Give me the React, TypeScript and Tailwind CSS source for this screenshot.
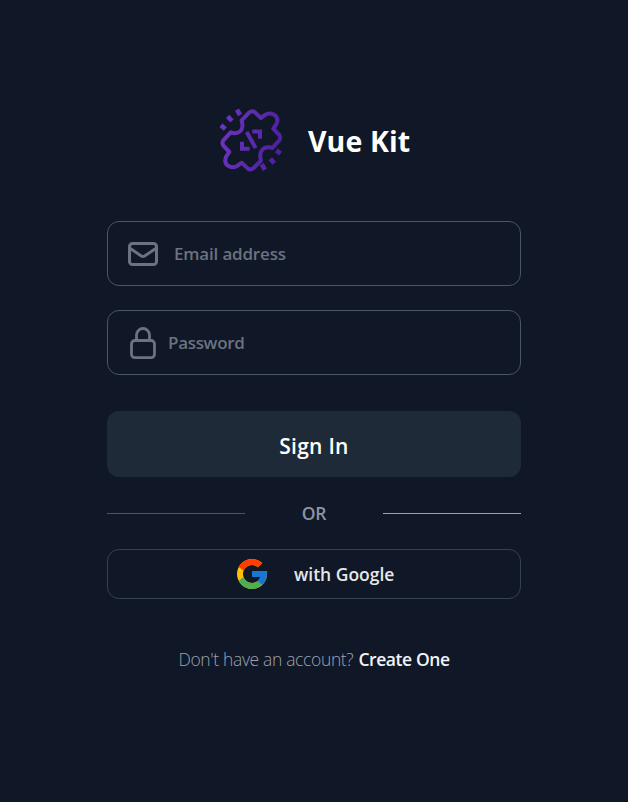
import type { ReactNode } from "react";

function Logo() {
  return (
    <svg className="h-[84px] w-[84px] shrink-0" viewBox="0 0 252 252" fill="none" aria-hidden="true">
      <defs>
        <linearGradient id="purple" gradientUnits="userSpaceOnUse" x1="30" y1="100" x2="220" y2="150">
          <stop offset="0" stopColor="#6b34c0" />
          <stop offset="1" stopColor="#4c1f9c" />
        </linearGradient>
      </defs>
      <g stroke="url(#purple)" strokeWidth="12">
        <path
          strokeLinejoin="round"
          d="M95 67L117 44Q126 36 135 43L153 60C157 58 160 54 165 51C182 40 205 51 202 70C201 79 195 85 190 92L208 111Q213 119 208 127L187 150C179 147 170 147 162 151C151 158 149 173 153 188L131 210Q122 218 113 211L95 194C91 196 88 200 83 203C66 214 43 203 46 184C47 175 53 169 58 162L40 143Q35 135 40 127L62 103C69 106 78 107 86 103C98 97 99 82 95 67Z"
        />
        <path d="M110 102L137 150M127 100.500H150V122M96 131V152.500H119" />
        <path strokeWidth="14" d="M33 82L46 93M53 55L66 69M81 35L90 51M199 157L212 167M181 182L193 196M155 199L165 215" />
      </g>
    </svg>
  );
}

function MailIcon() {
  return (
    <svg className="h-[36px] w-[36px] shrink-0" viewBox="0 0 24 24" fill="none" stroke="#6b7280" strokeWidth="2" strokeLinecap="round" strokeLinejoin="round" aria-hidden="true">
      <path d="M3 8l7.89 5.26a2 2 0 002.22 0L21 8M5 19h14a2 2 0 002-2V7a2 2 0 00-2-2H5a2 2 0 00-2 2v10a2 2 0 002 2z" />
    </svg>
  );
}

function LockIcon() {
  return (
    <svg className="h-[36px] w-[36px] shrink-0" viewBox="0 0 36 36" fill="none" stroke="#6b7280" strokeWidth="2.8" strokeLinecap="round" strokeLinejoin="round" aria-hidden="true">
      <rect x="6.500" y="15.500" width="23" height="17.200" rx="3.400" />
      <path d="M11.500 15.500V10a6.500 6.500 0 0113 0v5.500" />
    </svg>
  );
}

function GoogleIcon() {
  return (
    <svg className="h-[36px] w-[36px] shrink-0" viewBox="0 0 48 48" aria-hidden="true">
      <path fill="#FFC107" d="M43.6 20H24v8h11.3C33.7 32.7 29.2 36 24 36c-6.6 0-12-5.4-12-12s5.4-12 12-12c3.1 0 5.8 1.2 8 3l5.7-5.7C34 6.1 29.3 4 24 4 13 4 4 13 4 24s9 20 20 20 20-9 20-20c0-1.4-.1-2.7-.4-4z" />
      <path fill="#FF3D00" d="M6.3 14.7l6.6 4.8C14.7 15.1 19 12 24 12c3.1 0 5.8 1.2 8 3l5.7-5.7C34 6.1 29.3 4 24 4 16.3 4 9.7 8.3 6.3 14.7z" />
      <path fill="#4CAF50" d="M24 44c5.2 0 9.9-2 13.4-5.2l-6.2-5.2A12 12 0 0124 36c-5.2 0-9.6-3.3-11.3-7.9l-6.5 5C9.5 39.6 16.2 44 24 44z" />
      <path fill="#1976D2" d="M43.6 20H24v8h11.3a12 12 0 01-4.1 5.6l6.2 5.2C37 39.2 44 34 44 24c0-1.4-.1-2.7-.4-4z" />
    </svg>
  );
}

function Field({ children }: { children: ReactNode }) {
  return <label className="flex h-[65px] items-center rounded-xl border border-[#4b5563] pl-[17px]">{children}</label>;
}

const inputStyle =
  "min-w-0 flex-1 bg-transparent text-[17px] font-semibold text-gray-300 outline-none placeholder:text-[#6b7280]";

export default function App() {
  return (
    <main className="flex h-[802px] w-full flex-col items-center bg-[#101726] pt-[98px] font-['Open_Sans','Noto_Sans',sans-serif]">
      <header className="flex h-[84px] w-[208px] items-center gap-[14px]">
        <Logo />
        <h1 className="mt-[2px] shrink-0 text-[28.5px] font-bold tracking-[0.1px] whitespace-nowrap text-white">Vue Kit</h1>
      </header>

      <form className="mt-[39px] flex w-[414px] flex-col">
        <Field>
          <MailIcon />
          <input type="email" placeholder="Email address" className={`${inputStyle} ml-[13px] tracking-[-0.18px]`} />
        </Field>
        <div className="mt-6">
          <Field>
            <LockIcon />
            <input type="password" placeholder="Password" className={`${inputStyle} ml-[7px] tracking-[-0.32px]`} />
          </Field>
        </div>
        <button type="button" className="mt-9 h-[66px] rounded-xl bg-[#1f2a38] pt-[5px] text-[21px] font-semibold tracking-[0.25px] text-white">
          Sign In
        </button>
        <div className="mt-[25px] grid h-[23px] grid-cols-3 items-center">
          <span className="h-px bg-[#4b5563]" />
          <span className="text-center text-[17.5px] leading-[23px] font-semibold tracking-[-0.2px] text-[#8d95a2]">OR</span>
          <span className="h-px bg-[#9ca3af]" />
        </div>
        <button type="button" className="mt-[24px] flex h-[50px] items-center rounded-xl border border-[#374151] pl-[126px]">
          <GoogleIcon />
          <span className="mt-px ml-[24px] text-[17.5px] font-semibold text-[#e5e7eb]">with Google</span>
        </button>
      </form>

      <p className="mt-[46px] flex items-center gap-[5px] text-[17.5px] leading-[28px] whitespace-nowrap">
        <span className="font-light tracking-[-0.35px] text-[#9ca3af]">Don't have an account?</span>
        <a className="font-semibold tracking-[-0.42px] text-[#f3f4f6]">Create One</a>
      </p>
    </main>
  );
}
